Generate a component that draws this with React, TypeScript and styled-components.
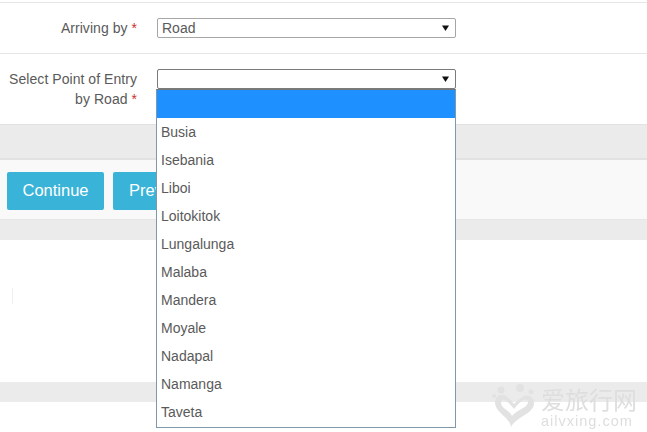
import React from "react";
import styled, { createGlobalStyle } from "styled-components";

const Global = createGlobalStyle`
  html, body { margin: 0; padding: 0; background: #fff; }
  body { font-family: "Liberation Sans", Arial, sans-serif; font-size: 14px; color: #5a5a5a; }
`;

const Page = styled.div`
  position: relative;
  width: 647px;
  height: 432px;
  overflow: hidden;
  padding-top: 2px;
  box-sizing: border-box;
`;

const FormRow = styled.div<{ $height: number }>`
  display: grid;
  grid-template-columns: 137px 299px;
  column-gap: 20px;
  height: ${(p) => p.$height}px;
  box-sizing: border-box;
  border-top: 1px solid #e6e6e6;
  padding-top: 15px;
  line-height: 20px;
`;

const Label = styled.div`
  text-align: right;
  letter-spacing: 0.05px;
  color: #5a5a5a;
`;

const LabelLine = styled.div`
  white-space: nowrap;
`;

const Star = styled.span`
  color: #c9302c;
`;

const Select = styled.div<{ $dark?: boolean }>`
  display: flex;
  align-items: center;
  justify-content: space-between;
  height: 20px;
  box-sizing: border-box;
  border: 1px solid ${(p) => (p.$dark ? "#7b7b7b" : "#a6a6a6")};
  border-radius: 2px;
  padding: 0 6px 0 4px;
  background: #fff;
  color: #5a5a5a;
  line-height: 18px;
`;

const Band = styled.div<{ $height: number }>`
  height: ${(p) => p.$height}px;
  background: #ebebeb;
  box-sizing: border-box;
`;

const TopBand = styled(Band)`
  border-top: 1px solid #e2e2e2;
  border-bottom: 2px solid #e2e2e2;
`;

const Toolbar = styled.div`
  display: flex;
  gap: 9px;
  height: 60px;
  box-sizing: border-box;
  padding: 12px 7px 0;
  background: #f9f9f9;
  border-bottom: 1px solid #e6e6e6;
`;

const Button = styled.div`
  width: 97px;
  height: 38px;
  flex: none;
  background: #39b3d7;
  border-radius: 2px;
  color: #fff;
  font-size: 16.5px;
  line-height: 37px;
  text-align: center;
`;

const PrevButton = styled(Button)`
  width: 110px;
  text-align: left;
  padding-left: 16px;
  box-sizing: border-box;
`;

const Blank = styled.div`
  height: 142px;
  padding: 48px 0 0 12px;
  box-sizing: border-box;
`;

const FaintRule = styled.div`
  width: 1px;
  height: 16px;
  background: #f1f1f1;
`;

const Dropdown = styled.ul`
  position: absolute;
  left: 156px;
  top: 89px;
  width: 300px;
  height: 339px;
  margin: 0;
  padding: 0;
  box-sizing: border-box;
  list-style: none;
  background: #fff;
  border: 1px solid #7f99ab;
  border-top-color: #777;
`;

const Option = styled.li<{ $active?: boolean }>`
  height: 28px;
  line-height: 28px;
  padding-left: 4px;
  color: #5a5a5a;
  background: ${(p) => (p.$active ? "#1e90ff" : "transparent")};
`;

const Watermark = styled.div`
  position: absolute;
  left: 491px;
  top: 384px;
  display: flex;
  gap: 4px;
  filter: blur(0.6px);
`;

const MarkText = styled.div`
  display: flex;
  flex-direction: column;
  gap: 1px;
  color: #dedede;
`;

const MarkTitle = styled.div`
  font-family: "Noto Sans CJK SC", sans-serif;
  font-size: 24px;
  line-height: 26px;
  margin-top: 2px;
  white-space: nowrap;
`;

const MarkSub = styled.div`
  font-size: 14.5px;
  line-height: 16px;
  letter-spacing: 1px;
  white-space: nowrap;
`;

const Arrow = () => (
  <svg width="7" height="6" viewBox="0 0 7 6" aria-hidden="true">
    <path d="M0 0.500h7L3.500 6z" fill="#111" />
  </svg>
);

const Heart = () => (
  <svg width="46" height="44" viewBox="0 0 46 44" aria-hidden="true">
    <path
      d="M20 43C19 33 4 29 4 18 4 12 10 9 15 12c3 2 6 5 8 8 3-3 6-6 10-8 5-2 10 1 10 7 0 11-17 13-23 24zM21 32c4-6 16-8 16-14 0-3-3-3-5-2-3 2-6 5-9 9-3-4-6-7-9-9-2-1-4 0-4 3 0 5 8 7 11 13z"
      fill="#e2e2e2"
      fillRule="evenodd"
    />
    <circle cx="10" cy="6" r="3.500" fill="#e2e2e2" />
    <circle cx="29" cy="4" r="4" fill="#e2e2e2" />
    <circle cx="3" cy="12" r="2" fill="#e2e2e2" />
    <circle cx="40" cy="8" r="2.500" fill="#e2e2e2" />
  </svg>
);

const options = [
  "", "Busia", "Isebania", "Liboi", "Loitokitok", "Lungalunga",
  "Malaba", "Mandera", "Moyale", "Nadapal", "Namanga", "Taveta",
];

export default function App() {
  return (
    <Page>
      <Global />
      <FormRow $height={51}>
        <Label><LabelLine>Arriving by <Star>*</Star></LabelLine></Label>
        <Select>Road<Arrow /></Select>
      </FormRow>
      <FormRow $height={71}>
        <Label>
          <LabelLine>Select Point of Entry</LabelLine>
          <LabelLine>by Road <Star>*</Star></LabelLine>
        </Label>
        <Select $dark><span /><Arrow /></Select>
      </FormRow>
      <TopBand $height={36} />
      <Toolbar>
        <Button>Continue</Button>
        <PrevButton>Previous</PrevButton>
      </Toolbar>
      <Band $height={20} />
      <Blank><FaintRule /></Blank>
      <Band $height={20} />
      <Dropdown>
        {options.map((o, i) => (
          <Option key={i} $active={i === 0}>{o}</Option>
        ))}
      </Dropdown>
      <Watermark>
        <Heart />
        <MarkText>
          <MarkTitle>爱旅行网</MarkTitle>
          <MarkSub>ailvxing.com</MarkSub>
        </MarkText>
      </Watermark>
    </Page>
  );
}
